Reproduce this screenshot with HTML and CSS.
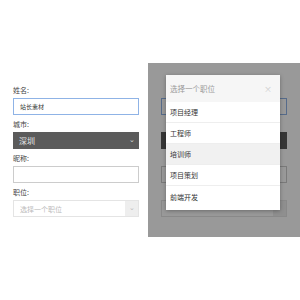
FILE: index.html
```html
<!DOCTYPE html>
<html lang="zh-CN">
  <head>
    <meta charset="UTF-8" />
    <meta name="viewport" content="width=device-width, initial-scale=1.0" />
    <title>表单选择</title>
    <link rel="stylesheet" href="styles.css">
  </head>
  <body>
    <div class="page">
      <div class="pane">
        <div class="form">
          <div class="label">姓名:</div>
          <div class="field input focus">站长素材</div>
          <div class="label">城市:</div>
          <div class="field select dark">深圳<span class="chev">&#8964;</span></div>
          <div class="label">昵称:</div>
          <div class="field input"></div>
          <div class="label">职位:</div>
          <div class="field select light">选择一个职位<span class="chev box">&#8964;</span></div>
        </div>
      </div>

      <!-- same form behind the open picker, only its boxes show -->
      <div class="pane right">
        <div class="form">
          <div class="label"></div>
          <div class="field input focus"></div>
          <div class="label"></div>
          <div class="field select dark"></div>
          <div class="label"></div>
          <div class="field input"></div>
          <div class="label"></div>
          <div class="field select light"><span class="chev box"></span></div>
        </div>
        <div class="mask"></div>
        <div class="picker">
          <div class="picker-head">选择一个职位<span class="close">&times;</span></div>
          <div class="opt">项目经理</div>
          <div class="opt">工程师</div>
          <div class="opt active">培训师</div>
          <div class="opt">项目策划</div>
          <div class="opt last">前端开发</div>
        </div>
      </div>
    </div>
  </body>
</html>
```

FILE: styles.css
```css
body {
  margin: 0;
  background: #fff;
  font-family: "Noto Sans CJK SC", "Noto Sans", sans-serif;
}
.page {
  display: flex;
  padding-top: 63px;
}
.pane {
  width: 148px;
  height: 174px;
  box-sizing: border-box;
  padding: 20px 10px 0 13px;
}
.pane.right {
  width: 152px;
  position: relative;
  overflow: hidden;
}
.form {
  width: 126px;
}
.label {
  height: 14px;
  font-size: 7px;
  line-height: 14px;
  color: #444;
  margin-bottom: 1px;
}
.field {
  height: 17px;
  box-sizing: border-box;
  margin-bottom: 2px;
  display: flex;
  align-items: center;
  position: relative;
}
.input {
  border: 1px solid #ccc;
  background: #fff;
  font-size: 6px;
  color: #333;
  padding-left: 6px;
}
.input.focus {
  border-color: #8fb3e6;
}
.select {
  font-size: 7px;
  padding-left: 6px;
}
.select.dark {
  background: #5b5b5b;
  color: #e6e6e6;
  font-size: 8px;
}
.select.light {
  border: 1px solid #e4e4e4;
  color: #bbb;
}
.chev {
  position: absolute;
  right: 4px;
  top: 1px;
  font-size: 7px;
  line-height: 12px;
  color: #ddd;
}
.chev.box {
  right: 0;
  top: 0;
  width: 13px;
  height: 15px;
  text-align: center;
  background: #eee;
  color: #bbb;
}
.mask {
  position: absolute;
  inset: 0;
  background: rgba(0, 0, 0, 0.4);
}
.picker {
  position: absolute;
  left: 18px;
  top: 12px;
  width: 114px;
  background: #fff;
  padding-bottom: 3px;
  box-shadow: 0 1px 4px rgba(0, 0, 0, 0.3);
}
.picker-head {
  height: 27px;
  display: flex;
  align-items: center;
  justify-content: space-between;
  padding: 0 8px 0 4px;
  background: #f6f6f6;
  font-size: 7.5px;
  color: #999;
}
.close {
  color: #ccc;
  font-size: 8px;
}
.opt {
  height: 21px;
  box-sizing: border-box;
  display: flex;
  align-items: center;
  padding-left: 4px;
  font-size: 7px;
  color: #333;
  border-bottom: 1px solid #eee;
}
.opt.active {
  background: #f1f1f1;
}
.opt.last {
  border-bottom: none;
}
```
